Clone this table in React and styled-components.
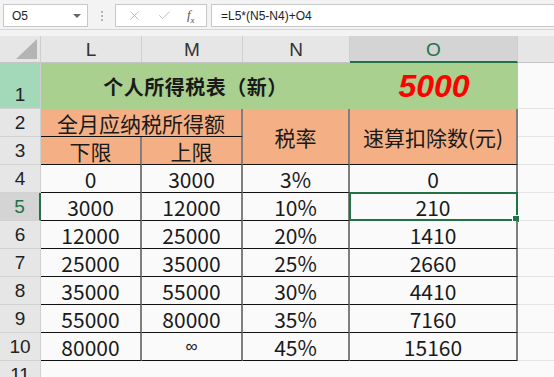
import React from "react";
import styled, { createGlobalStyle } from "styled-components";
import { X, Check } from "lucide-react";

const GlobalStyle = createGlobalStyle`
  * { box-sizing: border-box; }
  body {
    margin: 0;
    background: #f3f3f3;
    font-family: "Noto Sans CJK SC", "Liberation Sans", sans-serif;
  }
`;

const Page = styled.div`
  width: 554px;
  height: 377px;
  overflow: hidden;
  background: #f3f3f3;
  display: flex;
  flex-direction: column;
`;

const FormulaBar = styled.div`
  flex-shrink: 0;
  height: 30px;
  display: flex;
  align-items: flex-start;
  padding-top: 4px;
  padding-left: 3px;
  border-bottom: 1px solid #d4d4d4;
`;

const NameBox = styled.div`
  width: 85px;
  height: 23px;
  background: #fff;
  border: 1px solid #c8c8c8;
  display: flex;
  align-items: center;
  justify-content: space-between;
  padding: 0 6px 0 8px;
  font-family: "Liberation Sans", sans-serif;
  font-size: 12px;
  color: #222;
`;

const DropArrow = styled.span`
  width: 0;
  height: 0;
  border-left: 4px solid transparent;
  border-right: 4px solid transparent;
  border-top: 4px solid #666;
`;

const Dots = styled.div`
  width: 27px;
  height: 23px;
  display: flex;
  flex-direction: column;
  align-items: center;
  justify-content: center;
  gap: 2px;

  span {
    width: 2px;
    height: 2px;
    background: #b5b5b5;
  }
`;

const FxBox = styled.div`
  width: 92px;
  height: 23px;
  background: #fff;
  border: 1px solid #c8c8c8;
  display: flex;
  align-items: center;
  justify-content: space-around;
  padding: 0 4px;
  color: #b0b0b0;
`;

const FxLabel = styled.span`
  font-family: "Liberation Serif", serif;
  font-style: italic;
  font-size: 13px;
  color: #555;

  sub {
    font-size: 9px;
  }
`;

const FormulaInput = styled.div`
  flex: 1;
  height: 23px;
  margin-left: 4px;
  background: #fff;
  border: 1px solid #c8c8c8;
  border-right: none;
  display: flex;
  align-items: center;
  padding-left: 9px;
  font-family: "Liberation Sans", sans-serif;
  font-size: 12px;
  color: #222;
`;

const Spacer = styled.div`
  flex-shrink: 0;
  height: 6px;
`;

const Sheet = styled.div`
  flex-shrink: 0;
  display: grid;
  grid-template-columns: 41px 101px 101px 107px 168px 1fr;
  grid-template-rows: 27px 46px repeat(10, 28px);
  background: #fafafa;
`;

const Corner = styled.div`
  background: #e6e6e6;
  border-right: 1px solid #cfcfcf;
  border-bottom: 1px solid #c4c4c4;
  display: flex;
  align-items: flex-end;
  justify-content: flex-end;
  padding: 0 3px 3px 0;
`;

const ColHead = styled.div`
  background: ${(p) => (p.$selected ? "#d4d4d4" : "#e6e6e6")};
  color: ${(p) => (p.$selected ? "#217346" : "#333")};
  border-right: ${(p) => (p.$last ? "none" : "1px solid #cfcfcf")};
  border-bottom: ${(p) => (p.$selected ? "2px solid #217346" : "1px solid #c4c4c4")};
  font-family: "Liberation Sans", sans-serif;
  font-size: 19px;
  display: flex;
  align-items: center;
  justify-content: center;
  padding-top: 2px;
`;

const RowHead = styled.div`
  grid-column: 1;
  background: ${(p) => (p.$selected ? "#d4d4d4" : p.$tint ? "#a3d8b8" : "#e6e6e6")};
  color: ${(p) => (p.$selected ? "#217346" : "#222")};
  border-right: ${(p) => (p.$selected ? "2px solid #217346" : "1px solid #cfcfcf")};
  border-bottom: 1px solid #d2d2d2;
  font-family: "Liberation Sans", sans-serif;
  font-size: 19px;
  display: flex;
  align-items: ${(p) => (p.$tall ? "flex-end" : "center")};
  justify-content: center;
  padding-bottom: ${(p) => (p.$tall ? "2px" : "0")};
`;

const Cell = styled.div`
  position: relative;
  grid-column: ${(p) => p.$col} / span ${(p) => p.$span || 1};
  grid-row: ${(p) => p.$row} / span ${(p) => p.$rows || 1};
  background: ${(p) => p.$bg || "#fafafa"};
  border-right: ${(p) => (p.$noRight ? "none" : "2px solid #7f7f7f")};
  border-bottom: ${(p) => (p.$noBottom ? "none" : "1px solid #111")};
  display: flex;
  align-items: center;
  justify-content: center;
  font-size: 21px;
  color: #1a1a1a;
  white-space: nowrap;
`;

const EmptyCell = styled.div`
  grid-column: 6;
  background: #fafafa;
  border-bottom: 1px solid #e4e4e4;
`;

const Title = styled.span`
  font-weight: bold;
  font-size: 20px;
  letter-spacing: 0.5px;
`;

const Threshold = styled.span`
  font-family: "Liberation Sans", sans-serif;
  font-weight: bold;
  font-style: italic;
  font-size: 32px;
  color: #ff0000;
`;

const Infinity = styled.span`
  font-family: "Liberation Sans", sans-serif;
  font-size: 17px;
`;

const Selection = styled.div`
  position: absolute;
  inset: -1px -2px -1px -1px;
  border: 2px solid #217346;
  pointer-events: none;

  &::after {
    content: "";
    position: absolute;
    right: -4px;
    bottom: -4px;
    width: 6px;
    height: 6px;
    background: #217346;
    border: 1px solid #fff;
  }
`;

const GREEN = "#a9d08e";
const ORANGE = "#f4b084";

const rows = [
  ["0", "3000", "3%", "0"],
  ["3000", "12000", "10%", "210"],
  ["12000", "25000", "20%", "1410"],
  ["25000", "35000", "25%", "2660"],
  ["35000", "55000", "30%", "4410"],
  ["55000", "80000", "35%", "7160"],
  ["80000", "∞", "45%", "15160"],
];

export default function App() {
  return (
    <Page>
      <GlobalStyle />
      <FormulaBar>
        <NameBox>
          O5
          <DropArrow />
        </NameBox>
        <Dots>
          <span />
          <span />
          <span />
        </Dots>
        <FxBox>
          <X size={15} strokeWidth={1.3} />
          <Check size={15} strokeWidth={1.3} />
          <FxLabel>
            f<sub>x</sub>
          </FxLabel>
        </FxBox>
        <FormulaInput>=L5*(N5-N4)+O4</FormulaInput>
      </FormulaBar>
      <Spacer />
      <Sheet>
        <Corner>
          <svg width="21" height="20" viewBox="0 0 21 20">
            <polygon points="21,0 21,20 0,20" fill="#b4b4b4" />
          </svg>
        </Corner>
        <ColHead>L</ColHead>
        <ColHead>M</ColHead>
        <ColHead>N</ColHead>
        <ColHead $selected>O</ColHead>
        <ColHead $last />

        <RowHead $tint $tall style={{ gridRow: 2 }}>1</RowHead>
        <Cell $col={2} $row={2} $span={3} $bg={GREEN} $noRight $noBottom>
          <Title>个人所得税表（新）</Title>
        </Cell>
        <Cell $col={5} $row={2} $bg={GREEN} $noRight $noBottom>
          <Threshold>5000</Threshold>
        </Cell>
        <EmptyCell style={{ gridRow: 2 }} />

        <RowHead style={{ gridRow: 3 }}>2</RowHead>
        <Cell $col={2} $row={3} $span={2} $bg={ORANGE}>
          全月应纳税所得额
        </Cell>
        <Cell $col={4} $row={3} $rows={2} $bg={ORANGE}>
          税率
        </Cell>
        <Cell $col={5} $row={3} $rows={2} $bg={ORANGE}>
          速算扣除数(元)
        </Cell>
        <EmptyCell style={{ gridRow: 3 }} />

        <RowHead style={{ gridRow: 4 }}>3</RowHead>
        <Cell $col={2} $row={4} $bg={ORANGE}>
          下限
        </Cell>
        <Cell $col={3} $row={4} $bg={ORANGE}>
          上限
        </Cell>
        <EmptyCell style={{ gridRow: 4 }} />

        {rows.map((r, i) => {
          const row = i + 5;
          return (
            <React.Fragment key={row}>
              <RowHead $selected={row === 6} style={{ gridRow: row }}>
                {row - 1}
              </RowHead>
              {r.map((v, j) => (
                <Cell key={j} $col={j + 2} $row={row}>
                  {v === "∞" ? <Infinity>∞</Infinity> : v}
                  {row === 6 && j === 3 && <Selection />}
                </Cell>
              ))}
              <EmptyCell style={{ gridRow: row }} />
            </React.Fragment>
          );
        })}

        <RowHead style={{ gridRow: 12 }}>11</RowHead>
      </Sheet>
    </Page>
  );
}
